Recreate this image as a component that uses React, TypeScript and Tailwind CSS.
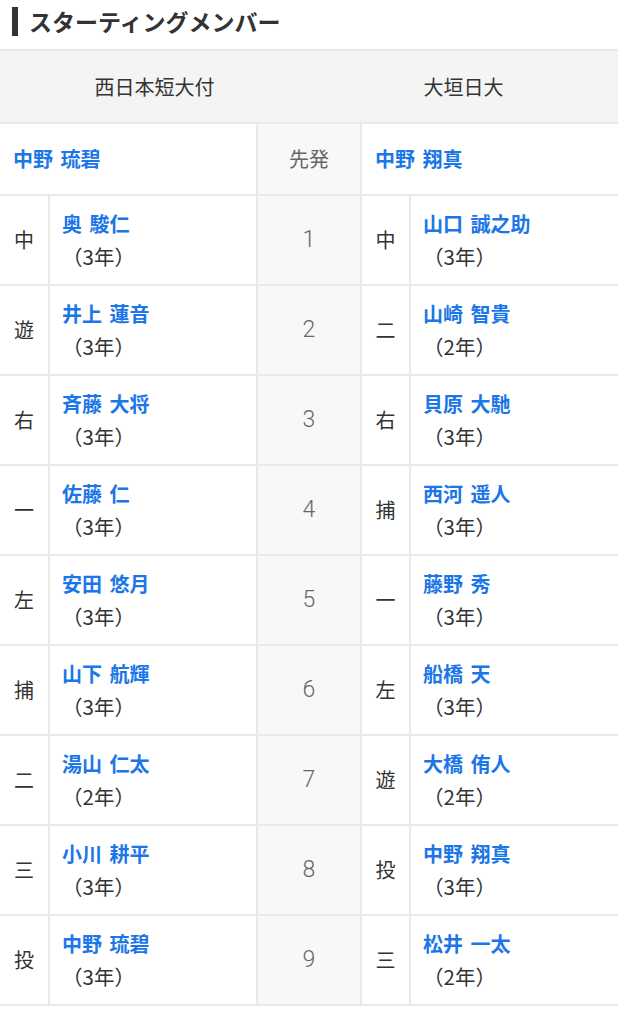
import React from "react";

type P = { pos: string; name: string; year: string };

const left: P[] = [
  { pos: "中", name: "奥 駿仁", year: "（3年）" },
  { pos: "遊", name: "井上 蓮音", year: "（3年）" },
  { pos: "右", name: "斉藤 大将", year: "（3年）" },
  { pos: "一", name: "佐藤 仁", year: "（3年）" },
  { pos: "左", name: "安田 悠月", year: "（3年）" },
  { pos: "捕", name: "山下 航輝", year: "（3年）" },
  { pos: "二", name: "湯山 仁太", year: "（2年）" },
  { pos: "三", name: "小川 耕平", year: "（3年）" },
  { pos: "投", name: "中野 琉碧", year: "（3年）" },
];

const right: P[] = [
  { pos: "中", name: "山口 誠之助", year: "（3年）" },
  { pos: "二", name: "山崎 智貴", year: "（2年）" },
  { pos: "右", name: "貝原 大馳", year: "（3年）" },
  { pos: "捕", name: "西河 遥人", year: "（3年）" },
  { pos: "一", name: "藤野 秀", year: "（3年）" },
  { pos: "左", name: "船橋 天", year: "（3年）" },
  { pos: "遊", name: "大橋 侑人", year: "（2年）" },
  { pos: "投", name: "中野 翔真", year: "（3年）" },
  { pos: "三", name: "松井 一太", year: "（2年）" },
];

function NameCell({ p }: { p: P }) {
  return (
    <div className="bg-white px-[12px] py-[12px] flex flex-col justify-center">
      <div className="h-[32px] leading-[32px] font-bold text-[#1b76e8] [word-spacing:3px]">{p.name}</div>
      <div className="h-[32px] leading-[32px] text-[#333] text-[20.5px]">{p.year}</div>
    </div>
  );
}

export default function App() {
  return (
    <div
      className="w-[618px] bg-white text-[20px] text-[#333]"
      style={{ fontFamily: '"Noto Sans CJK JP", "Noto Sans", sans-serif' }}
    >
      <div className="h-[49px] flex items-start pt-[7px] pl-[12px]">
        <div className="w-[6px] h-[29px] bg-[#333]" />
        <div className="ml-[11px] text-[23px] leading-[29px] font-bold text-[#333]">
          スターティングメンバー
        </div>
      </div>
      <div className="bg-[#e9e9e9] py-[2px]">
        <div className="grid grid-cols-2 h-[71px] bg-[#f4f4f4]">
          <div className="flex items-center justify-center">西日本短大付</div>
          <div className="flex items-center justify-center">大垣日大</div>
        </div>
        <div className="grid grid-cols-[48px_206px_102px_47px_1fr] gap-[2px] mt-[2px]">
          <div className="col-span-2 bg-white h-[70px] flex items-center px-[13px] font-bold text-[#1b76e8] [word-spacing:3px]">
            中野 琉碧
          </div>
          <div className="bg-[#f8f8f8] flex items-center justify-center text-[#666]">先発</div>
          <div className="col-span-2 bg-white flex items-center px-[13px] font-bold text-[#1b76e8] [word-spacing:3px]">
            中野 翔真
          </div>
          {left.map((l, i) => {
            const r = right[i];
            return (
              <React.Fragment key={i}>
                <div className="bg-white flex items-center justify-center">{l.pos}</div>
                <NameCell p={l} />
                <div
                  className="bg-[#f8f8f8] flex items-center justify-center text-[23px] text-[#666] font-light"
                  style={{ fontFamily: "Roboto, 'Noto Sans', sans-serif" }}
                >
                  {i + 1}
                </div>
                <div className="bg-white flex items-center justify-center">{r.pos}</div>
                <NameCell p={r} />
              </React.Fragment>
            );
          })}
        </div>
      </div>
    </div>
  );
}
